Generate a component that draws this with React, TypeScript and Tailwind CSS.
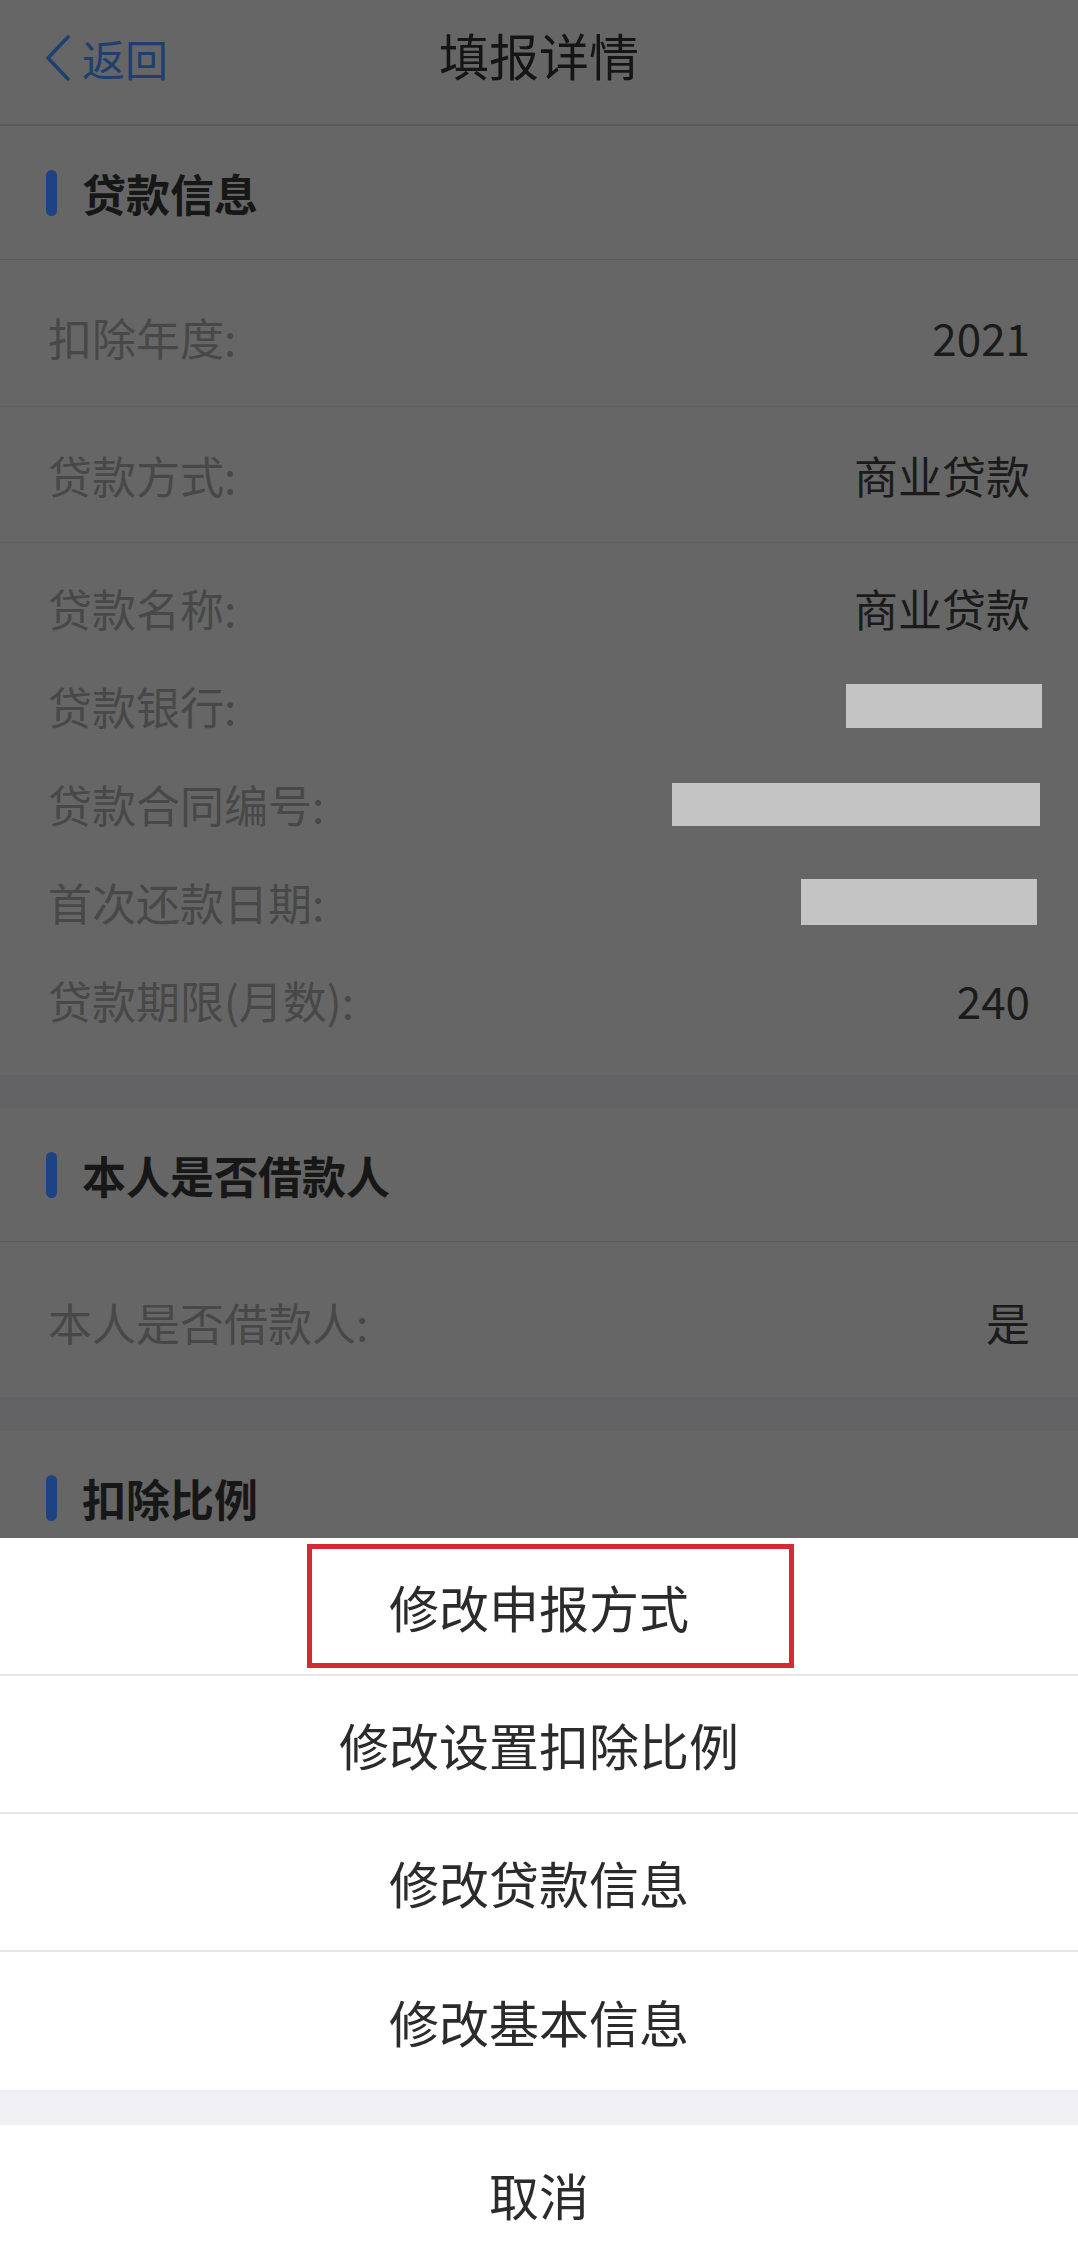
import React from "react";

type Row = { label: string; value?: string; mask?: string };

const loanRows: Row[] = [
  { label: "贷款名称:", value: "商业贷款" },
  { label: "贷款银行:", mask: "w-[196px] h-[44px] -mr-[12px]" },
  { label: "贷款合同编号:", mask: "w-[368px] h-[43px] -mr-[10px]" },
  { label: "首次还款日期:", mask: "w-[236px] h-[46px] -mr-[7px]" },
  { label: "贷款期限(月数):", value: "240" },
];

const actions = ["修改申报方式", "修改设置扣除比例", "修改贷款信息", "修改基本信息"];

function SectionTitle({ title }: { title: string }) {
  return (
    <div className="flex h-[134px] items-center pl-[46px] border-b border-[#5c5c5c]">
      <span className="h-[46px] w-[11px] rounded-full bg-[#1e4382]" />
      <span className="ml-[25px] text-[44px] leading-none font-bold text-[#171717]">{title}</span>
    </div>
  );
}

function InfoRow({ label, value, mask }: Row) {
  return (
    <div className="flex h-full items-center justify-between px-[48px]">
      <span className="text-[44px] leading-none text-[#484848]">{label}</span>
      {mask ? (
        <div className={`bg-[#c4c4c4] ${mask}`} />
      ) : (
        <span className="text-[44px] leading-none text-[#1b1b1b]">{value}</span>
      )}
    </div>
  );
}

export default function App() {
  return (
    <div className="relative h-[2262px] w-[1078px] overflow-hidden bg-[#666666] font-['Noto_Sans_CJK_SC','Noto_Sans',sans-serif]">
      {/* page behind the mask */}
      <div className="flex h-[126px] items-center pb-[8px] border-b-2 border-[#5a5a5a] relative">
        <div className="flex items-center pl-[45px] text-[#1f3f70]">
          <svg width="26" height="46" viewBox="0 0 26 46" fill="none">
            <polyline points="23,2 3,23 23,44" stroke="currentColor" strokeWidth="3.5" strokeLinecap="round" strokeLinejoin="round" />
          </svg>
          <span className="ml-[11px] text-[43px] leading-none">返回</span>
        </div>
        <h1 className="absolute left-0 right-0 pb-[8px] text-center text-[50px] leading-none font-normal text-[#151515]">填报详情</h1>
      </div>

      <SectionTitle title="贷款信息" />
      <div className="h-[147px] pt-[8px] border-b border-[#606060]">
        <InfoRow label="扣除年度:" value="2021" />
      </div>
      <div className="h-[136px] border-b border-[#606060]">
        <InfoRow label="贷款方式:" value="商业贷款" />
      </div>
      <div className="pt-[16px] pb-[26px]">
        {loanRows.map((r) => (
          <div key={r.label} className="h-[98px]">
            <InfoRow {...r} />
          </div>
        ))}
      </div>

      <div className="h-[33px] bg-[#636366]" />
      <SectionTitle title="本人是否借款人" />
      <div className="h-[155px] pt-[4px]">
        <InfoRow label="本人是否借款人:" value="是" />
      </div>

      <div className="h-[34px] bg-[#636366]" />
      <SectionTitle title="扣除比例" />
      <div className="h-[140px]">
        <InfoRow label="扣除比例:" value="100%" />
      </div>

      {/* action sheet */}
      <div className="absolute bottom-0 left-0 right-0 bg-white">
        {actions.map((a, i) => (
          <div
            key={a}
            className={`relative flex h-[138px] items-center justify-center text-[50px] leading-none text-[#2b2b2b] ${
              i < actions.length - 1 ? "border-b-2 border-[#e6e6e6]" : ""
            }`}
          >
            {i === 0 && (
              <div className="absolute left-[307px] top-[6px] h-[124px] w-[487px] border-[5px] border-[#d42a34]" />
            )}
            {a}
          </div>
        ))}
        <div className="h-[35px] bg-[#efeff4]" />
        <div className="flex h-[137px] items-center justify-center text-[50px] leading-none text-[#2b2b2b]">取消</div>
      </div>
    </div>
  );
}
